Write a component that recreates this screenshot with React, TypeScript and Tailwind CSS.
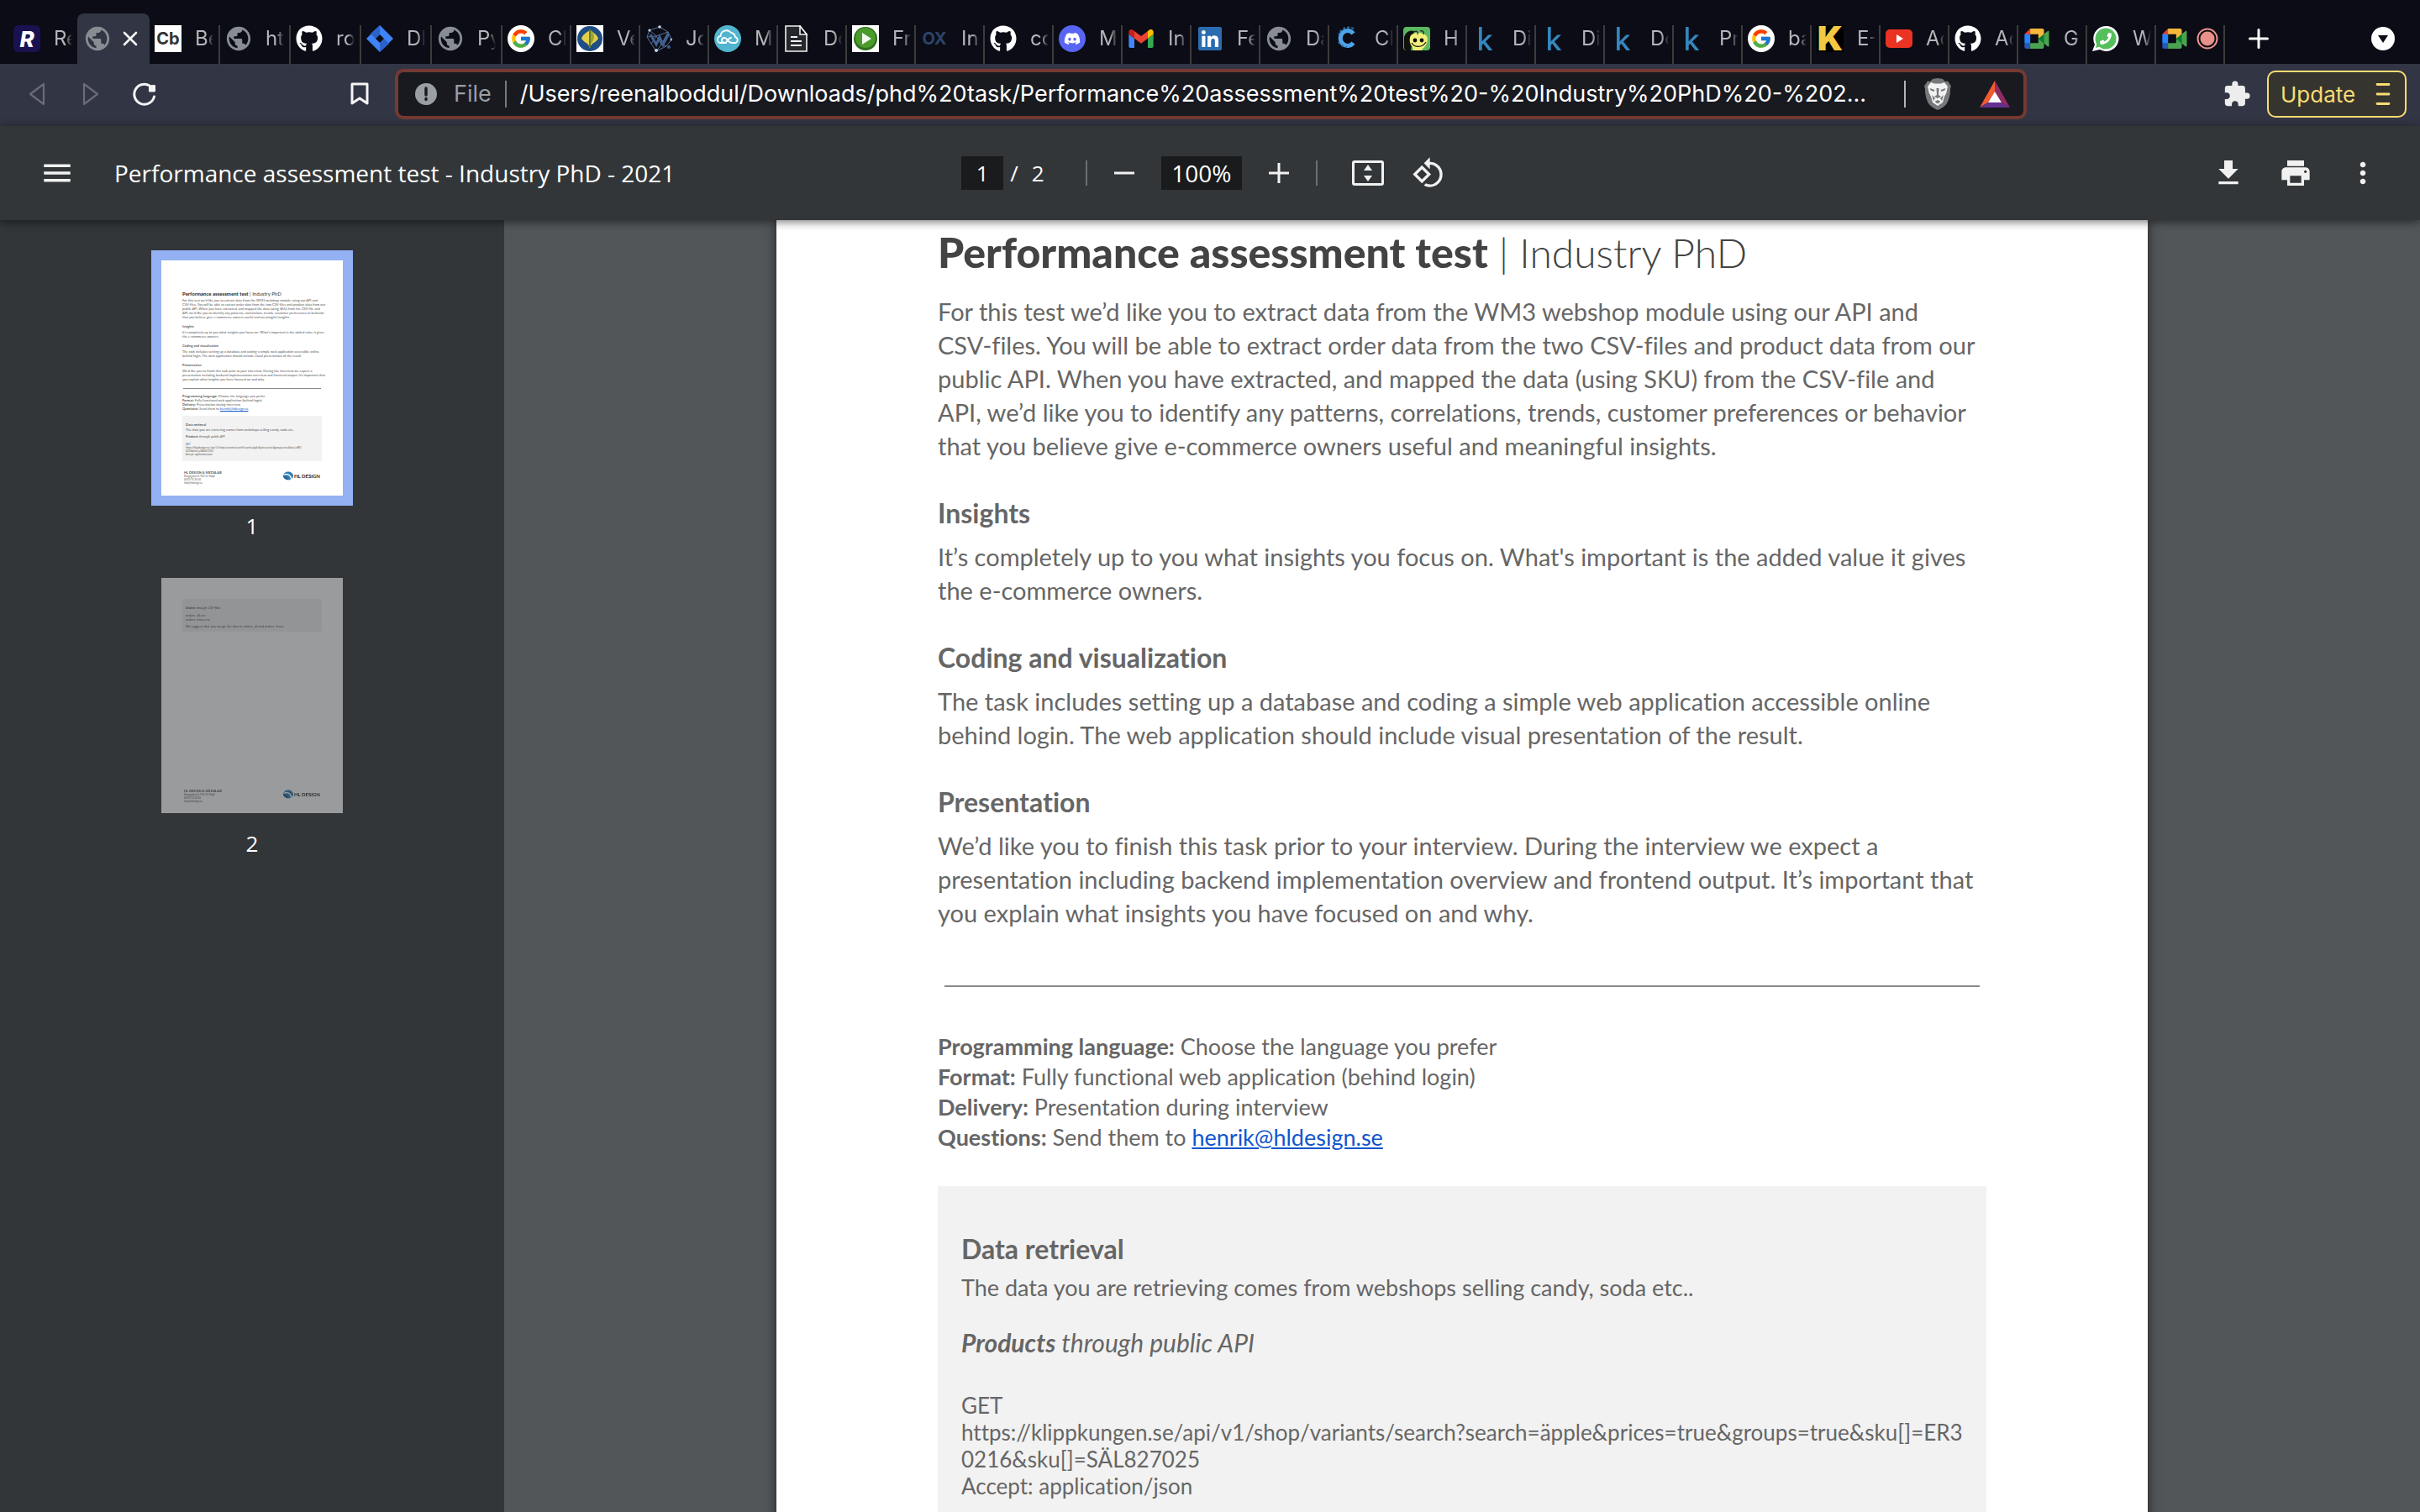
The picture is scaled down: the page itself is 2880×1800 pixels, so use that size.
import React from "react";
import type { ReactNode } from "react";
import { FaDiscord, FaGithub, FaKaggle, FaLinkedin, FaPhoneAlt } from "react-icons/fa";
import { FcGoogle } from "react-icons/fc";
import { MdExtension, MdMenu, MdMoreVert, MdPrint, MdPublic, MdRotate90DegreesCcw } from "react-icons/md";

/* ---------- favicons ---------- */

const Globe = () => <MdPublic className="-m-px size-[34px] shrink-0 text-[#878d93]" />;
const Github = () => <FaGithub className="size-8 text-white" />;
const Kaggle = () => <FaKaggle className="size-7 text-[#3587bd]" />;

const Google = () => (
  <span className="flex size-8 items-center justify-center rounded-full bg-white">
    <FcGoogle className="size-[26px]" />
  </span>
);

const Jira = () => (
  <svg viewBox="0 0 32 32" className="size-8">
    <path d="M16 0 32 16 16 32 0 16z" fill="#3f83f8" />
    <path d="M16 0v11l-5 5-6-6z" fill="#2a62c9" />
    <path d="M16 32V21l5-5 6 6z" fill="#2a62c9" />
    <path d="m16 11 5 5-5 5-5-5z" fill="#0b0c15" />
  </svg>
);

const Leaf = () => (
  <svg viewBox="0 0 32 32" className="size-8">
    <rect width="32" height="32" fill="#fff" />
    <circle cx="16" cy="16" r="15" fill="#1f4e86" />
    <path d="M16 6c5 3 9 6 10 10-2 3-5 5-7 6l-3 4-3-4c-2-1-5-3-7-6 1-4 5-7 10-10z" fill="#e3cf4a" />
    <path d="M16 5c4 3 5 6 5 9s-2 7-5 9z" fill="#9aa531" />
    <path d="M16 5v22" stroke="#5f7d2c" strokeWidth="2" />
  </svg>
);

const Network = () => (
  <svg viewBox="0 0 32 32" className="size-8" fill="none">
    <path d="m5 6 12-4 10 6 4 9-6 8-12 6-6-9-5-8zM5 6l8 7 14-5M2 14l11-1 6 10 6 2M13 13l-6 9M27 8l-8 15-6 8" stroke="#5b7397" strokeWidth="1" />
    <path d="m6 11 7 12 4-9 4 9 7-13" stroke="#3f6190" strokeWidth="3" />
    <circle cx="17" cy="2" r="1.8" fill="#c5d3e2" />
    <circle cx="5" cy="6" r="1.6" fill="#c5d3e2" />
    <circle cx="31" cy="17" r="1.6" fill="#8fb0d4" />
    <circle cx="28" cy="26" r="2" fill="#3f6190" />
    <circle cx="13" cy="30" r="2" fill="#b9d3e6" />
  </svg>
);

const Cloud = () => (
  <svg viewBox="0 0 32 32" className="size-8" fill="none">
    <circle cx="16" cy="16" r="16" fill="#52b5cf" />
    <path d="M14 21H8a4 4 0 0 1-.5-8A7 7 0 0 1 20 9a6 6 0 0 1 5 5 3.600 3.600 0 0 1 0 7h-4c-5 0-5-6-9-6a3 3 0 1 0 0 6c4 0 4-6 8-6" stroke="#fff" strokeWidth="1.800" strokeLinecap="round" />
  </svg>
);

const Doc = () => (
  <svg viewBox="0 0 32 32" className="size-8" fill="none">
    <path d="M3 1h17l8 10v20H3z" fill="#26272b" stroke="#f1f1f1" strokeWidth="1.600" />
    <path d="M20 1v10h8z" fill="#0b0c15" stroke="#f1f1f1" strokeWidth="1.600" />
    <path d="M9 14h8M9 19h13M9 24h13" stroke="#f1f1f1" strokeWidth="2" />
  </svg>
);

const Play = () => (
  <svg viewBox="0 0 32 32" className="size-8">
    <rect width="32" height="32" fill="#fff" />
    <circle cx="16" cy="16" r="14" fill="#2c6f1d" />
    <circle cx="16" cy="15" r="12" fill="#4a9b2c" />
    <path d="m12 9 11 7-11 7z" fill="#f4f7ef" />
  </svg>
);

const Discord = () => (
  <span className="flex size-8 items-center justify-center rounded-full bg-[#5865f2]">
    <FaDiscord className="size-5 text-white" />
  </span>
);

const Gmail = () => (
  <svg viewBox="52 42 88 66" className="h-[22px] w-[30px]">
    <path fill="#4285f4" d="M58 108h14V74L52 59v43c0 3.320 2.690 6 6 6" />
    <path fill="#34a853" d="M120 108h14c3.320 0 6-2.690 6-6V59l-20 15" />
    <path fill="#fbbc04" d="M120 48v26l20-15v-8c0-7.420-8.470-11.650-14.400-7.200" />
    <path fill="#ea4335" d="M72 74V48l24 18 24-18v26L96 92" />
    <path fill="#c5221f" d="M52 51v8l20 15V48l-5.600-4.200c-5.940-4.450-14.400-.220-14.400 7.200" />
  </svg>
);

const LinkedIn = () => (
  <span className="flex size-7 items-center justify-center rounded-sm bg-[linear-gradient(#fff,#fff)] bg-[length:20px_20px] bg-center bg-no-repeat">
    <FaLinkedin className="size-8 shrink-0 text-[#2b6cb0]" />
  </span>
);

const PixelC = () => (
  <svg viewBox="0 0 32 32" className="size-8" fill="none">
    <path d="M22.500 10A8.500 9 0 1 0 22.500 21" stroke="#4da3e8" strokeWidth="5" />
    <path d="M23 4a13 13 0 0 0-18 7M5 20a12 12 0 0 0 10 6" stroke="#2c6fa8" strokeWidth="2" strokeDasharray="3 2" />
  </svg>
);

const Smiley = () => (
  <svg viewBox="0 0 32 32" className="size-8" fill="none">
    <rect y="2" width="32" height="28" rx="4" fill="#5cb860" />
    <path d="M1 28V14c2-6 7-9 12-7L9 30H3z" fill="#0d120b" />
    <path d="M9 12c4-4 15-4 19 1 2 5 0 12-5 15l-1 2H12l-1-4C7 22 7 16 9 12z" fill="#f3ef7b" />
    <circle cx="14" cy="18" r="2.400" fill="#111" />
    <circle cx="22" cy="18" r="2.400" fill="#111" />
    <path d="M10 21c3 6 13 6 17-1M13 8c3-2 5 0 4 3M20 7c3-1 5 1 4 4" stroke="#222" strokeWidth="1.300" />
  </svg>
);

const YouTube = () => (
  <svg viewBox="0 0 32 32" className="size-8">
    <rect y="5" width="32" height="22" rx="5" fill="#ea3323" />
    <path d="m13 11 8 5-8 5z" fill="#fff" />
  </svg>
);

const Meet = () => (
  <svg viewBox="0 0 88 72" className="h-6 w-[30px]">
    <path fill="#00832d" d="m49.500 36 8.530 9.750 11.470 7.330 2-17.020-2-16.640-11.690 6.440z" />
    <path fill="#2858b8" d="M0 51.500V66c0 3.315 2.685 6 6 6h14.500l3-10.960-3-9.540-9.950-3z" />
    <path fill="#e94235" d="M20.500 0 0 20.500l10.550 3 9.950-3 2.950-9.410z" />
    <path fill="#2684fc" d="M20.500 20.500H0v31h20.500z" />
    <path fill="#4aa350" d="M82.600 8.680 69.500 19.420v33.660l13.160 10.790c1.970 1.540 4.850.135 4.850-2.370V11c0-2.535-2.945-3.925-4.910-2.320zM49.500 36v15.500h-29V72h43c3.315 0 6-2.685 6-6V53.080z" />
    <path fill="#f6b73c" d="M63.500 0h-43v20.500h29V36l20-16.570V6c0-3.315-2.685-6-6-6z" />
  </svg>
);

const WhatsApp = () => (
  <span className="relative flex size-8 items-center justify-center">
    <svg viewBox="0 0 32 32" className="size-8">
      <path d="M16 1a15 15 0 1 1-7 28l-9 2 3-8A15 15 0 0 1 16 1z" fill="#fff" />
      <circle cx="16" cy="16" r="12.500" fill="#54bf5b" />
      <path d="m4 27 2-7 5 5z" fill="#54bf5b" />
    </svg>
    <FaPhoneAlt className="absolute size-3.5 -scale-x-100 text-white" />
  </span>
);

const Record = () => (
  <svg viewBox="0 0 26 26" className="size-[26px]">
    <circle cx="13" cy="13" r="11.500" fill="none" stroke="#e8918b" strokeWidth="2" />
    <circle cx="13" cy="13" r="8.500" fill="#e8918b" />
  </svg>
);

/* ---------- tab strip ---------- */

type TabItem = { icon: ReactNode; label: string; wide?: boolean };

const tabs: TabItem[] = [
  {
    icon: <span className="flex size-8 items-center justify-center bg-white text-[20px] font-bold text-[#333]">Cb</span>,
    label: "Be", wide: true,
  },
  { icon: <Globe />, label: "ht", wide: true },
  { icon: <Github />, label: "ro", wide: true },
  { icon: <Jira />, label: "DI", wide: true },
  { icon: <Globe />, label: "Py", wide: true },
  { icon: <Google />, label: "Cl" },
  { icon: <Leaf />, label: "Ve" },
  { icon: <Network />, label: "Jo" },
  { icon: <Cloud />, label: "M" },
  { icon: <Doc />, label: "Do" },
  { icon: <Play />, label: "Fr" },
  { icon: <span className="text-[20px] font-bold text-[#2b4468]">OX</span>, label: "In" },
  { icon: <Github />, label: "co" },
  { icon: <Discord />, label: "M" },
  { icon: <Gmail />, label: "In" },
  { icon: <LinkedIn />, label: "Fe" },
  { icon: <Globe />, label: "Da" },
  { icon: <PixelC />, label: "Cl" },
  { icon: <Smiley />, label: "H" },
  { icon: <Kaggle />, label: "Di" },
  { icon: <Kaggle />, label: "Di" },
  { icon: <Kaggle />, label: "Do" },
  { icon: <Kaggle />, label: "Pr" },
  { icon: <Google />, label: "ba" },
  {
    icon: <span className="flex size-8 items-center justify-center bg-black text-[40px] leading-8 font-black text-[#f5c842]">K</span>,
    label: "E-",
  },
  { icon: <YouTube />, label: "Ac" },
  { icon: <Github />, label: "Ac" },
  { icon: <Meet />, label: "G" },
  { icon: <WhatsApp />, label: "W" },
];

const TabLabel = ({ children }: { children: ReactNode }) => (
  <span className="w-[22px] overflow-hidden text-left text-[24px] whitespace-nowrap text-[#b4b5b8] [mask-image:linear-gradient(to_right,black_60%,transparent)]">
    {children}
  </span>
);

const Tab = ({ icon, label, wide }: TabItem) => (
  <button type="button" className={`flex h-[60px] shrink-0 items-center pl-1.5 ${wide ? "w-[84px]" : "w-[82px]"}`}>
    <span className="mr-4 flex size-8 shrink-0 items-center justify-center">{icon}</span>
    <TabLabel>{label}</TabLabel>
    <span className="ml-auto h-[46px] w-0.5 self-end bg-[#3d3c3c]" />
  </button>
);

const TabStrip = () => (
  <nav aria-label="Tabs" className="flex h-[76px] items-end bg-[#0b0c15]">
    <button type="button" className="flex h-[60px] w-[92px] shrink-0 items-center pl-4">
      <span className="mr-4 flex size-8 shrink-0 items-center justify-center rounded-md bg-[#1a1250] text-[26px] font-extrabold text-white italic">R</span>
      <TabLabel>Re</TabLabel>
    </button>
    <div className="flex h-[60px] w-[86px] shrink-0 items-center rounded-t-lg bg-[#323544] pl-2">
      <span className="flex size-8 items-center justify-center"><Globe /></span>
      <button type="button" aria-label="Close tab" className="ml-3.5">
        <svg viewBox="0 0 18 18" className="size-[18px]" stroke="#f4f4f5" strokeWidth="2.600" strokeLinecap="round">
          <path d="m2 2 14 14M16 2 2 16" />
        </svg>
      </button>
    </div>
    {tabs.map((t, i) => <Tab key={i} {...t} />)}
    <button type="button" className="flex h-[60px] w-[82px] shrink-0 items-center pl-1.5">
      <span className="mr-2.5 flex size-8 items-center justify-center"><Meet /></span>
      <Record />
      <span className="ml-auto h-[46px] w-0.5 self-end bg-[#3d3c3c]" />
    </button>
    <button type="button" aria-label="New tab" className="ml-7 flex h-[60px] items-center">
      <svg viewBox="0 0 24 24" className="size-6" stroke="#fff" strokeWidth="3" strokeLinecap="round">
        <path d="M12 1.500v21M1.500 12h21" />
      </svg>
    </button>
    <button type="button" aria-label="Search tabs" className="mr-[30px] ml-auto flex h-[60px] items-center">
      <svg viewBox="0 0 28 28" className="size-7">
        <circle cx="14" cy="14" r="14" fill="#fff" />
        <path d="M8 10h12l-6 9z" fill="#0b0c15" />
      </svg>
    </button>
  </nav>
);

/* ---------- address bar ---------- */

const iconButton = "flex size-16 shrink-0 items-center justify-center";

const BrowserBar = () => (
  <div className="flex h-[74px] items-center bg-[#323544] pr-4 pb-0.5 pl-3">
    <button type="button" aria-label="Back" className={iconButton}>
      <svg viewBox="0 0 20 28" className="h-7 w-5" fill="none" stroke="#696b78" strokeWidth="2.200" strokeLinejoin="round"><path d="M18 2v24L2 14z" /></svg>
    </button>
    <button type="button" aria-label="Forward" className={iconButton}>
      <svg viewBox="0 0 20 28" className="h-7 w-5" fill="none" stroke="#696b78" strokeWidth="2.200" strokeLinejoin="round"><path d="M2 2v24l16-12z" /></svg>
    </button>
    <button type="button" aria-label="Reload" className={iconButton}>
      <svg viewBox="0 0 28 28" className="size-7" fill="none">
        <path d="M25.500 17A12 12 0 1 1 20 4" stroke="#f4f4f5" strokeWidth="3" strokeLinecap="round" />
        <path d="M19 3.500 25 3a1.500 1.500 0 0 1 2 1.500V10a1.500 1.500 0 0 1-2 1.500h-5a1.500 1.500 0 0 1-1-2z" fill="#f4f4f5" />
      </svg>
    </button>
    <button type="button" aria-label="Bookmark this page" className={`${iconButton} ml-48`}>
      <svg viewBox="0 0 22 28" className="h-7 w-[22px]" fill="none" stroke="#f4f4f5" strokeWidth="3" strokeLinejoin="round"><path d="M2 2h18v23l-9-6-9 6z" /></svg>
    </button>

    <div className="ml-2.5 flex h-[60px] min-w-0 flex-1 items-center rounded-[10px] border-4 border-[#743a32] bg-[#191a20] pr-4 pl-5">
      <svg viewBox="0 0 26 26" className="size-[26px] shrink-0">
        <circle cx="13" cy="13" r="13" fill="#9a9ea5" />
        <path d="M13 6v8M13 18.500v1" stroke="#191a20" strokeWidth="3.400" strokeLinecap="round" />
      </svg>
      <span className="ml-5 text-[27px] text-[#9a9ea5]">File</span>
      <span className="ml-4 h-8 w-0.5 bg-[#777980]" />
      <input
        aria-label="Address"
        readOnly
        value="/Users/reenalboddul/Downloads/phd%20task/Performance%20assessment%20test%20-%20Industry%20PhD%20-%202..."
        className="ml-4 min-w-0 flex-1 bg-transparent text-[27px] text-white outline-none"
      />
      <span className="h-8 w-0.5 bg-[#b3b4b8]" />
      <button type="button" aria-label="Brave Shields" className="ml-[22px]">
        <svg viewBox="0 0 32 38" className="h-[38px] w-8">
          <path d="m10 1 6-1 6 1 3 3 3-.500 4 6-1 3c.500 6-2 15-5 19-3 3-6 5-10 6.500-4-1.500-7-3.500-10-6.500C3 27.500.500 18.500 1 12.500l-1-3 4-6 3 .500z" fill="#77787a" />
          <path d="m8 5 4 1.500h8L24 5l4 5-1 4c0 3-2 6-3 8l-2 7-6 4-6-4-2-7c-1-2-3-5-3-8l-1-4z" fill="#f2f2f2" />
          <path d="m6.500 12 6 2-1 2-4-1.500zM25.500 12l-6 2 1 2 4-1.500zM14.500 12h3l-.500 8 3 2-4 2-4-2 3-2zM9 20l4 4-2 3zM23 20l-4 4 2 3zM12.500 28l3.500-2 3.500 2-3.500 2.500z" fill="#77787a" />
        </svg>
      </button>
      <button type="button" aria-label="Brave Rewards" className="ml-[34px]">
        <svg viewBox="0 0 36 32" className="h-8 w-9">
          <path d="M18 0 0 32l10-6 8-13z" fill="#f15a31" />
          <path d="m18 0 18 32-10-6-8-13z" fill="#8f2b62" />
          <path d="M0 32h36l-10-6H10z" fill="#65308f" />
          <path d="m18 13 8 13H10z" fill="#fff" />
        </svg>
      </button>
    </div>

    <button type="button" aria-label="Extensions" className={`${iconButton} ml-[218px]`}>
      <MdExtension className="size-[34px] text-[#ededee]" />
    </button>
    <button type="button" className="ml-1 flex h-14 w-[166px] shrink-0 items-center justify-between rounded-[10px] border-2 border-[#fbdc74] bg-[#35342f] pr-4 pl-3.5 text-[26px] text-[#fbdc74]">
      Update
      <svg viewBox="0 0 20 28" className="h-7 w-5" stroke="#fbdc74" strokeWidth="2.800" strokeLinecap="round">
        <path d="M3 2.500h14M3 14h14M3 25.500h14" />
      </svg>
    </button>
  </div>
);

/* ---------- PDF toolbar ---------- */

const Separator = () => <span className="h-[30px] w-0.5 bg-[#6c6f72]" />;

const PdfToolbar = () => (
  <header className="relative z-10 flex h-28 items-center bg-[#323639] px-9 font-['Open_Sans',sans-serif] text-[28px] text-white shadow-[0_2px_10px_rgba(0,0,0,0.55)]">
    <div className="flex flex-1 basis-0 items-center">
      <button type="button" aria-label="Menu" className={iconButton}><MdMenu className="size-[42px] text-[#f1f1f1]" /></button>
      <h1 className="ml-9 whitespace-nowrap">Performance assessment test - Industry PhD - 2021</h1>
    </div>
    <div className="flex shrink-0 items-center pr-1">
      <input aria-label="Page number" defaultValue="1" className="h-10 w-[50px] bg-[#191b1c] text-center text-[26px]" />
      <span className="ml-2 text-[26px]">/</span>
      <span className="ml-4 w-12 text-[26px]">2</span>
      <span className="ml-4 flex"><Separator /></span>
      <button type="button" aria-label="Zoom out" className={`${iconButton} ml-3`}>
        <svg viewBox="0 0 24 24" className="size-6" stroke="#f1f1f1" strokeWidth="3"><path d="M0 12h24" /></svg>
      </button>
      <input aria-label="Zoom level" defaultValue="100%" className="mx-3 h-10 w-24 bg-[#191b1c] text-center text-[28px]" />
      <button type="button" aria-label="Zoom in" className={iconButton}>
        <svg viewBox="0 0 24 24" className="size-6" stroke="#f1f1f1" strokeWidth="3"><path d="M0 12h24M12 0v24" /></svg>
      </button>
      <span className="ml-3 flex"><Separator /></span>
      <button type="button" aria-label="Fit to page" className={`${iconButton} ml-7`}>
        <svg viewBox="0 0 38 30" className="h-[30px] w-[38px]">
          <rect x="1.500" y="1.500" width="35" height="27" rx="1.500" fill="none" stroke="#f1f1f1" strokeWidth="3" />
          <path d="m19 5 5 7H14zM19 25l5-7H14z" fill="#f1f1f1" />
        </svg>
      </button>
      <button type="button" aria-label="Rotate counterclockwise" className={`${iconButton} ml-2`}>
        <MdRotate90DegreesCcw className="size-10 text-[#f1f1f1]" />
      </button>
    </div>
    <div className="flex flex-1 basis-0 items-center justify-end gap-4">
      <button type="button" aria-label="Download" className={iconButton}>
        <svg viewBox="0 0 24 24" className="size-10" fill="#f1f1f1"><path d="M19 9h-4V3H9v6H5l7 7zM5 18v2h14v-2z" /></svg>
      </button>
      <button type="button" aria-label="Print" className={iconButton}><MdPrint className="size-10 text-[#f1f1f1]" /></button>
      <button type="button" aria-label="More actions" className={iconButton}><MdMoreVert className="size-10 text-[#f1f1f1]" /></button>
    </div>
  </header>
);

/* ---------- document text ---------- */

const intro = [
  "For this test we’d like you to extract data from the WM3 webshop module using our API and",
  "CSV-files. You will be able to extract order data from the two CSV-files and product data from our",
  "public API. When you have extracted, and mapped the data (using SKU) from the CSV-file and",
  "API, we’d like you to identify any patterns, correlations, trends, customer preferences or behavior",
  "that you believe give e-commerce owners useful and meaningful insights.",
];

const sections = [
  {
    title: "Insights",
    lines: [
      "It’s completely up to you what insights you focus on. What's important is the added value it gives",
      "the e-commerce owners.",
    ],
  },
  {
    title: "Coding and visualization",
    lines: [
      "The task includes setting up a database and coding a simple web application accessible online",
      "behind login. The web application should include visual presentation of the result.",
    ],
  },
  {
    title: "Presentation",
    lines: [
      "We’d like you to finish this task prior to your interview. During the interview we expect a",
      "presentation including backend implementation overview and frontend output. It’s important that",
      "you explain what insights you have focused on and why.",
    ],
  },
];

const facts = [
  ["Programming language:", "Choose the language you prefer"],
  ["Format:", "Fully functional web application (behind login)"],
  ["Delivery:", "Presentation during interview"],
];

const request = [
  "GET",
  "https://klippkungen.se/api/v1/shop/variants/search?search=äpple&prices=true&groups=true&sku[]=ER3",
  "0216&sku[]=SÄL827025",
  "Accept: application/json",
];

const Lines = ({ lines }: { lines: string[] }) => (
  <>{lines.map((l) => <span key={l} className="block whitespace-nowrap">{l}</span>)}</>
);

const docFont = "font-['Lato',sans-serif] [font-variant-ligatures:none]";

/* ---------- thumbnails ---------- */

const ThumbFooter = () => (
  <span className="flex items-start justify-between px-0.5">
    <span className="block text-[3px] leading-[4px]">
      <span className="block text-[4px] font-bold">HL DESIGN &amp; MEDIA AB</span>
      <span className="block">Kungsgatan 6, 952 33 Växjö</span>
      <span className="block">0470-70 30 50</span>
      <span className="block">info@hldesign.se</span>
    </span>
    <span className="flex items-center gap-px text-[6px] leading-[10px] font-bold text-[#222]">
      <svg viewBox="0 0 26 22" className="h-[11px] w-3">
        <ellipse cx="13" cy="11" rx="13" ry="11" fill="#2f7db4" />
        <path d="M2 7c8-5 17-1 21 11l-3 2C17 9 11 6 1 10z" fill="#fff" />
        <path d="M0 12c6-1 10 3 12 9l-4-1C7 16 4 14 1 14z" fill="#1d4f7c" />
      </svg>
      HL DESIGN
    </span>
  </span>
);

const thumbPage = `block h-[280px] w-[216px] bg-white px-[25px] text-left text-[4px] leading-[5px] text-[#555] ${docFont}`;

const ThumbOne = () => (
  <span className={`${thumbPage} pt-9`}>
    <span className="block text-[6px] leading-[8px] text-[#333]"><b className="font-black">Performance assessment test</b> | Industry PhD</span>
    <span className="mt-px block"><Lines lines={intro} /></span>
    {sections.map((s) => (
      <span key={s.title} className="mt-1.5 block">
        <b className="block">{s.title}</b>
        <span className="mt-0.5 block"><Lines lines={s.lines} /></span>
      </span>
    ))}
    <span className="mx-px mt-2 block h-px bg-[#888]" />
    <span className="mt-1.5 block">
      {facts.map(([k, v]) => <span key={k} className="block"><b>{k}</b> {v}</span>)}
      <span className="block"><b>Questions:</b> Send them to <span className="text-[#1155cc] underline">henrik@hldesign.se</span></span>
    </span>
    <span className="mt-1.5 block h-[54px] bg-[#f2f2f2] px-1 pt-2">
      <b className="block">Data retrieval</b>
      <span className="mt-px block">The data you are retrieving comes from webshops selling candy, soda etc..</span>
      <i className="mt-[3px] block"><b>Products</b> through public API</i>
      <span className="mt-[5px] block text-[3px] leading-[4px]"><Lines lines={request} /></span>
    </span>
    <span className="mt-3 block"><ThumbFooter /></span>
  </span>
);

const ThumbTwo = () => (
  <span className={`${thumbPage} flex flex-col pt-[25px] pb-3 opacity-50`}>
    <span className="block h-[39px] bg-[#f2f2f2] px-1 pt-2">
      <i className="block"><b>Orders</b> through CSV-files</i>
      <span className="mt-1 block">orders_all.csv</span>
      <span className="block">orders_times.csv</span>
      <span className="mt-[3px] block">We suggest that you merge the data in orders_all and orders_times</span>
    </span>
    <span className="mt-auto block"><ThumbFooter /></span>
  </span>
);

const Sidebar = () => (
  <aside className="flex w-[600px] shrink-0 flex-col items-center gap-[46px] bg-[#323639] pt-12 font-['Open_Sans',sans-serif] text-[26px] text-white">
    <button type="button" aria-label="Page 1" className="block">
      <span className="block ring-12 ring-[#94b2f3]"><ThumbOne /></span>
      <span className="mt-5 block leading-8">1</span>
    </button>
    <button type="button" aria-label="Page 2" className="block">
      <ThumbTwo />
      <span className="mt-5 block leading-8">2</span>
    </button>
  </aside>
);

/* ---------- page ---------- */

const Page = () => (
  <article className={`w-full max-w-[1632px] bg-white px-48 pt-2 text-[29px] leading-10 text-[#666] shadow-[0_0_12px_rgba(0,0,0,0.6)] ${docFont}`}>
    <h2 className="text-[48px] leading-[60px] font-light text-[#434343]">
      <b className="text-[50px] font-black">Performance assessment test</b> | Industry PhD
    </h2>
    <p className="mt-5"><Lines lines={intro} /></p>
    {sections.map((s) => (
      <section key={s.title} className="mt-10">
        <h3 className="text-[32px] leading-10 font-bold">{s.title}</h3>
        <p className="mt-3"><Lines lines={s.lines} /></p>
      </section>
    ))}
    <hr className="mx-2 mt-[66px] border-0 border-t-2 border-[#8b8b8b]" />
    <div className="mt-[53px] text-[27px] leading-9">
      {facts.map(([k, v]) => <p key={k}><b>{k}</b> {v}</p>)}
      <p><b>Questions:</b> Send them to <a href="mailto:henrik@hldesign.se" className="text-[#1155cc] underline">henrik@hldesign.se</a></p>
    </div>
    <section className="mt-10 bg-[#f2f2f2] px-7 pt-[55px] pb-16">
      <h3 className="text-[32px] leading-10 font-bold">Data retrieval</h3>
      <p className="mt-2 text-[27px] leading-9">The data you are retrieving comes from webshops selling candy, soda etc..</p>
      <p className="mt-[27px] text-[30px] italic"><b>Products</b> through public API</p>
      <p className="mt-[39px] text-[26px] leading-8"><Lines lines={request} /></p>
    </section>
  </article>
);

export default function App() {
  return (
    <div className="flex h-screen flex-col overflow-hidden bg-[#525659] font-['Inter',sans-serif]">
      <TabStrip />
      <BrowserBar />
      <PdfToolbar />
      <div className="flex min-h-0 flex-1">
        <Sidebar />
        <main className="flex min-w-0 flex-1 items-start justify-center overflow-hidden"><Page /></main>
      </div>
    </div>
  );
}
